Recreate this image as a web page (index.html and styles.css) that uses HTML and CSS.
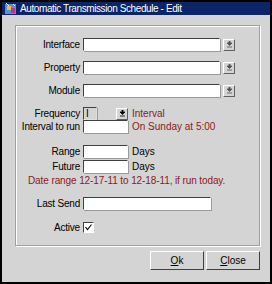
FILE: index.html
```html
<!DOCTYPE html>
<html lang="en">
<head>
    <meta charset="UTF-8">
    <title>Automatic Transmission Schedule - Edit</title>
    <link rel="stylesheet" href="styles.css">
</head>
<body>
    <div class="window">
        <div class="titlebar">
            <svg class="app-icon" width="12" height="12" viewBox="0 0 12 12">
                <rect x="0" y="1" width="11" height="10" fill="#5a8fd0"/>
                <rect x="2" y="3" width="4" height="4" fill="#e8c040"/>
                <rect x="6" y="5" width="4" height="5" fill="#c03090"/>
                <path d="M1 0 L4 3 M8 1 L10 3" stroke="#fff" stroke-width="1"/>
            </svg>
            <span class="title">Automatic Transmission Schedule - Edit</span>
        </div>

        <div class="content">
            <div class="group">
                <div class="row row-select">
                    <label class="label">Interface</label>
                    <span class="input wide"></span>
                    <span class="drop">
                        <svg width="7" height="7" viewBox="0 0 7 7"><path d="M1 2 H6 L3.5 4.5 Z M3 0 H4 V2 H3 Z M1 6 H6" fill="#505050" stroke="#505050" stroke-width="0.8"/></svg>
                    </span>
                </div>
                <div class="row row-select">
                    <label class="label">Property</label>
                    <span class="input wide"></span>
                    <span class="drop">
                        <svg width="7" height="7" viewBox="0 0 7 7"><path d="M1 2 H6 L3.5 4.5 Z M3 0 H4 V2 H3 Z M1 6 H6" fill="#505050" stroke="#505050" stroke-width="0.8"/></svg>
                    </span>
                </div>
                <div class="row row-select">
                    <label class="label">Module</label>
                    <span class="input wide"></span>
                    <span class="drop">
                        <svg width="7" height="7" viewBox="0 0 7 7"><path d="M1 2 H6 L3.5 4.5 Z M3 0 H4 V2 H3 Z M1 6 H6" fill="#505050" stroke="#505050" stroke-width="0.8"/></svg>
                    </span>
                </div>

                <div class="row freq">
                    <label class="label">Frequency</label>
                    <span class="input tiny">I</span>
                    <span class="drop small">
                        <svg width="7" height="7" viewBox="0 0 7 7"><path d="M1 2 H6 L3.5 4.5 Z M3 0 H4 V2 H3 Z M1 6 H6" fill="#000" stroke="#000" stroke-width="0.8"/></svg>
                    </span>
                    <span class="note">Interval</span>
                </div>
                <div class="row">
                    <label class="label">Interval to run</label>
                    <span class="input short"></span>
                    <span class="note">On Sunday at 5:00</span>
                </div>

                <div class="row range">
                    <label class="label">Range</label>
                    <span class="input short"></span>
                    <span class="unit">Days</span>
                </div>
                <div class="row future">
                    <label class="label">Future</label>
                    <span class="input short"></span>
                    <span class="unit">Days</span>
                </div>
                <div class="date-note">Date range 12-17-11 to 12-18-11, if run today.</div>

                <div class="row last-send">
                    <label class="label">Last Send</label>
                    <span class="input medium"></span>
                </div>
                <div class="row active-row">
                    <label class="label">Active</label>
                    <span class="check">
                        <svg width="9" height="9" viewBox="0 0 9 9"><path d="M1.5 4 L3.5 6.5 L7.5 1.5" fill="none" stroke="#000" stroke-width="1.1"/></svg>
                    </span>
                </div>
            </div>

            <div class="buttons">
                <button class="btn"><u>O</u>k</button>
                <button class="btn"><u>C</u>lose</button>
            </div>
        </div>
    </div>
</body>
</html>
```

FILE: styles.css
```css
body {
    margin: 0;
    font-family: "Liberation Sans", Arial, sans-serif;
    font-size: 10px;
    color: #000;
    background: #fff;
}

.window {
    width: 272px;
    height: 284px;
    box-sizing: border-box;
    border: 2px solid #000;
    background-color: #d4d4d4;
}

.titlebar {
    display: flex;
    align-items: center;
    height: 13px;
    padding-left: 3px;
    background-color: #0c2468;
    color: #fff;
}

.app-icon {
    margin-right: 3px;
}

.title {
    font-size: 10px;
    letter-spacing: -0.4px;
}

.content {
    padding: 10px 10px 0 13px;
}

.group {
    height: 221px;
    box-sizing: border-box;
    border: 1px solid #a0a0a0;
    box-shadow: 1px 1px 0 #fff, inset 1px 1px 0 #fff;
    padding-top: 12px;
}

.row {
    display: flex;
    align-items: center;
    height: 13px;
}

.row-select {
    margin-bottom: 10px;
}

.label {
    width: 64px;
    text-align: right;
    padding-right: 3px;
    white-space: nowrap;
    letter-spacing: -0.2px;
}

.input {
    height: 13px;
    box-sizing: border-box;
    background-color: #fff;
    border-top: 1px solid #404040;
    border-left: 1px solid #404040;
    border-right: 1px solid #fff;
    border-bottom: 1px solid #fff;
    box-shadow: 1px 1px 0 #9a9a9a;
    font-size: 10px;
    line-height: 11px;
    padding-left: 2px;
}

.wide {
    width: 137px;
}

.short {
    width: 45px;
}

.medium {
    width: 128px;
}

.tiny {
    width: 14px;
    background-color: #d4d4d4;
    border-color: #404040 #e0e0e0 #e0e0e0 #404040;
}

.drop {
    display: flex;
    align-items: center;
    justify-content: center;
    width: 12px;
    height: 12px;
    margin-left: 3px;
    box-sizing: border-box;
    border: 1px solid;
    border-color: #fff #606060 #606060 #fff;
    background-color: #d4d4d4;
}

.drop.small {
    margin-left: 19px;
}

.note {
    margin-left: 4px;
    color: #8b1a1a;
    white-space: nowrap;
}

.unit {
    margin-left: 4px;
}

.freq {
    margin-top: 4px;
}

.range {
    margin-top: 12px;
}

.future {
    margin-top: 2px;
}

.date-note {
    margin-top: 1px;
    height: 13px;
    line-height: 13px;
    padding-left: 12px;
    color: #8b1a1a;
    letter-spacing: -0.1px;
    white-space: nowrap;
}

.last-send {
    margin-top: 10px;
}

.active-row {
    margin-top: 11px;
}

.check {
    display: flex;
    align-items: center;
    justify-content: center;
    width: 11px;
    height: 11px;
    box-sizing: border-box;
    border-top: 1px solid #404040;
    border-left: 1px solid #404040;
    border-right: 1px solid #fff;
    border-bottom: 1px solid #fff;
    background-color: #fff;
}

.buttons {
    display: flex;
    justify-content: flex-end;
    gap: 2px;
    margin-top: 5px;
}

.btn {
    width: 54px;
    height: 19px;
    padding: 0;
    font-family: "Liberation Sans", Arial, sans-serif;
    font-size: 10px;
    color: #000;
    background-color: #d4d4d4;
    border: 1px solid;
    border-color: #fff #404040 #404040 #fff;
}
```
